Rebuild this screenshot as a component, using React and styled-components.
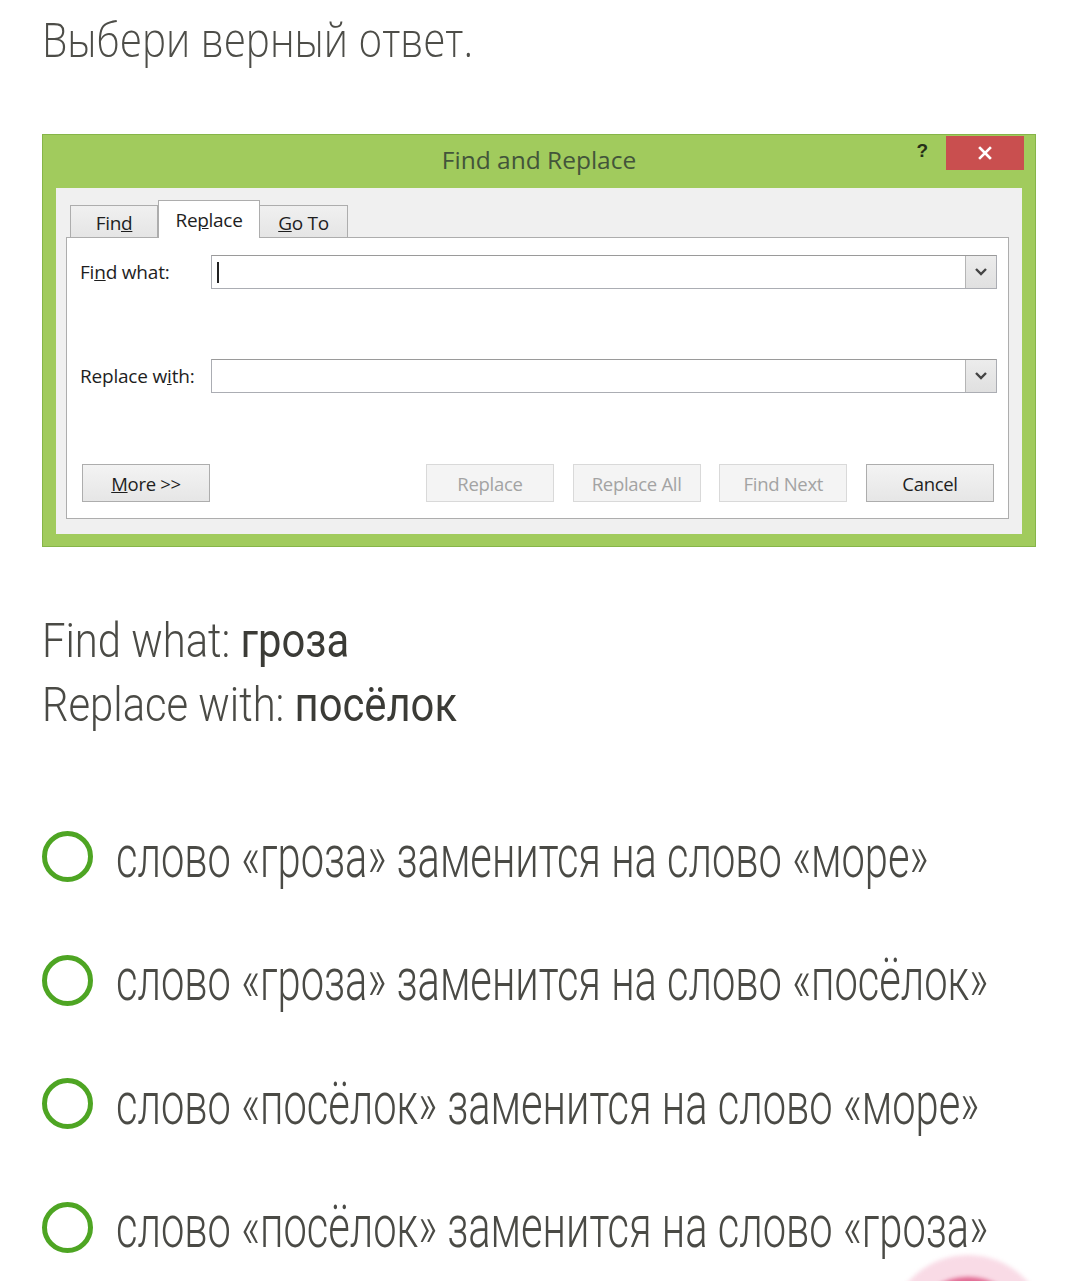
import React from "react";
import styled, { createGlobalStyle } from "styled-components";

const Global = createGlobalStyle`
  html, body { margin: 0; padding: 0; background: #fff; }
  body { width: 1080px; height: 1281px; overflow: hidden; }
  #root { height: 1281px; overflow: hidden; position: relative; }
`;

const Page = styled.div`
  padding: 0 0 0 42px;
  font-family: Roboto, "Noto Sans", sans-serif;
  color: #4a4a45;
`;

const Heading = styled.div`
  padding-top: 15px;
  height: 48px;
  font-family: "Open Sans", Roboto, sans-serif;
  font-weight: 300;
  font-size: 48px;
  line-height: 48px;
  color: #4d4d48;
`;

const Narrow = styled.span`
  display: inline-block;
  white-space: nowrap;
  transform-origin: 0 50%;
  transform: scaleX(${(p) => p.$k || 0.8});
`;

const Frame = styled.div`
  margin-top: 71px;
  width: 994px;
  height: 413px;
  box-sizing: border-box;
  background: #a1cb5d;
  border: 1px solid #86b548;
  display: flex;
  flex-direction: column;
  font-family: "Open Sans", "Noto Sans", sans-serif;
`;

const TitleBar = styled.div`
  height: 53px;
  display: grid;
  grid-template-columns: 1fr auto 1fr;
  align-items: start;
`;

const TitleText = styled.div`
  grid-column: 2;
  padding-top: 10px;
  font-size: 24.5px;
  line-height: 30px;
  color: #43553a;
`;

const Controls = styled.div`
  grid-column: 3;
  justify-self: end;
  display: flex;
  align-items: flex-start;
  padding-top: 1px;
  margin-right: 11px;
`;

const Help = styled.span`
  font-family: "Liberation Sans", Arial, sans-serif;
  font-weight: 700;
  font-size: 19px;
  line-height: 30px;
  color: #263018;
  margin-right: 18px;
`;

const Close = styled.div`
  width: 78px;
  height: 34px;
  background: #c94f4f;
  display: flex;
  align-items: center;
  justify-content: center;
`;

const Client = styled.div`
  flex: 1;
  margin: 0 13px 12px 13px;
  background: #f0f0f0;
  padding: 12px 13px 15px 10px;
  display: flex;
  flex-direction: column;
`;

const Tabs = styled.div`
  display: flex;
  align-items: flex-end;
  margin-left: 4px;
  position: relative;
  z-index: 1;
  margin-bottom: -1px;
`;

const Tab = styled.div`
  box-sizing: border-box;
  width: ${(p) => (p.$active ? 102 : 88)}px;
  height: ${(p) => (p.$active ? 38 : 33)}px;
  border: 1px solid #adadad;
  border-bottom: ${(p) => (p.$active ? "none" : "1px solid #adadad")};
  border-left: ${(p) => (p.$first || p.$active ? "1px solid #adadad" : "none")};
  background: ${(p) => (p.$active ? "#fff" : "linear-gradient(#f0f0f0, #e5e5e5)")};
  font-size: 19px;
  color: #1e1e1e;
  display: flex;
  justify-content: center;
  align-items: center;
  padding-top: ${(p) => (p.$active ? 0 : 2)}px;
  letter-spacing: -0.3px;
`;

const Panel = styled.div`
  flex: 1;
  border: 1px solid #adadad;
  background: #fff;
  padding: 17px 11px 16px 13px;
  display: flex;
  flex-direction: column;
`;

const FieldRow = styled.div`
  display: grid;
  grid-template-columns: 131px 1fr;
  align-items: center;
  margin-bottom: ${(p) => p.$gap}px;
`;

const Label = styled.div`
  font-size: 19px;
  color: #1e1e1e;
  letter-spacing: -0.2px;
  padding-left: 0;
`;

const Input = styled.div`
  height: 34px;
  box-sizing: border-box;
  border: 1px solid #abadb3;
  border-top-color: #9a9a9a;
  display: flex;
  align-items: center;
  background: #fff;
`;

const Caret = styled.span`
  width: 2px;
  height: 21px;
  background: #222;
  margin-left: 5px;
`;

const Drop = styled.div`
  margin-left: auto;
  width: 31px;
  height: 32px;
  box-sizing: border-box;
  border-left: 1px solid #b5b5b5;
  background: linear-gradient(#ececec, #e0e0e0);
  display: flex;
  align-items: center;
  justify-content: center;
`;

const Buttons = styled.div`
  margin-top: auto;
  display: flex;
  gap: 18.7px;
  padding: 0 3px 0 2px;
`;

const Btn = styled.div`
  width: 128px;
  height: 38px;
  box-sizing: border-box;
  border: 1px solid ${(p) => (p.$disabled ? "#d9d9d9" : "#adadad")};
  background: ${(p) => (p.$disabled ? "#f4f4f4" : "linear-gradient(#f3f3f3, #e6e6e6)")};
  color: ${(p) => (p.$disabled ? "#a3a3a3" : "#1e1e1e")};
  font-size: 18.5px;
  letter-spacing: -0.3px;
  display: flex;
  align-items: center;
  justify-content: center;
  margin-right: ${(p) => (p.$push ? "auto" : "0")};
`;

const Spec = styled.div`
  margin-top: 62px;
  font-size: 48px;
  line-height: 64px;
  font-weight: 300;
`;

const Strong = styled.b`
  font-weight: 400;
  color: #3b3b36;
`;

const Options = styled.div`
  margin-top: 58px;
  display: flex;
  flex-direction: column;
`;

const Option = styled.div`
  height: 123.5px;
  display: flex;
  align-items: center;
  gap: 23px;
`;

const Radio = styled.span`
  flex: none;
  width: 51px;
  height: 51px;
  box-sizing: border-box;
  border-radius: 50%;
  border: 5px solid #4ea523;
`;

const OptionText = styled.div`
  font-size: 60px;
  line-height: 60px;
  font-weight: 300;
  color: #4a4a45;
`;

const Fab = styled.div`
  position: absolute;
  left: 888px;
  top: 1255px;
  width: 160px;
  height: 160px;
  border-radius: 50%;
  background: rgba(244, 190, 210, 0.55);
  filter: blur(2px);
  display: flex;
  align-items: center;
  justify-content: center;
`;

const FabRing = styled.div`
  width: 116px;
  height: 116px;
  border-radius: 50%;
  box-sizing: border-box;
  border: 7px solid #e0648e;
`;

const options = [
  "слово «гроза» заменится на слово «море»",
  "слово «гроза» заменится на слово «посёлок»",
  "слово «посёлок» заменится на слово «море»",
  "слово «посёлок» заменится на слово «гроза»",
];

const Chevron = () => (
  <svg width="14" height="10" viewBox="0 0 14 10">
    <path d="M2 2 L7 7 L12 2" stroke="#444" strokeWidth="2.4" fill="none" />
  </svg>
);

export default function App() {
  return (
    <>
      <Global />
      <Page>
        <Heading>
          <Narrow $k={0.842}>Выбери верный ответ.</Narrow>
        </Heading>

        <Frame>
          <TitleBar>
            <TitleText>Find and Replace</TitleText>
            <Controls>
              <Help>?</Help>
              <Close>
                <svg width="16" height="16" viewBox="0 0 16 16">
                  <path d="M3 3 L13 13 M13 3 L3 13" stroke="#fff" strokeWidth="2.6" strokeLinecap="square" />
                </svg>
              </Close>
            </Controls>
          </TitleBar>
          <Client>
            <Tabs>
              <Tab $first>
                Fin<u>d</u>
              </Tab>
              <Tab $active>
                Re<u>p</u>lace
              </Tab>
              <Tab>
                <u>G</u>o To
              </Tab>
            </Tabs>
            <Panel>
              <FieldRow $gap={70}>
                <Label>
                  Fi<u>n</u>d what:
                </Label>
                <Input>
                  <Caret />
                  <Drop>
                    <Chevron />
                  </Drop>
                </Input>
              </FieldRow>
              <FieldRow $gap={0}>
                <Label>
                  Replace w<u>i</u>th:
                </Label>
                <Input>
                  <Drop>
                    <Chevron />
                  </Drop>
                </Input>
              </FieldRow>
              <Buttons>
                <Btn $push>
                  <span>
                    <u>M</u>ore &gt;&gt;
                  </span>
                </Btn>
                <Btn $disabled>Replace</Btn>
                <Btn $disabled>Replace All</Btn>
                <Btn $disabled>Find Next</Btn>
                <Btn>Cancel</Btn>
              </Buttons>
            </Panel>
          </Client>
        </Frame>

        <Spec>
          <div>
            <Narrow $k={0.87}>
              Find what: <Strong>гроза</Strong>
            </Narrow>
          </div>
          <div>
            <Narrow $k={0.87}>
              Replace with: <Strong>посёлок</Strong>
            </Narrow>
          </div>
        </Spec>

        <Options>
          {options.map((t) => (
            <Option key={t}>
              <Radio />
              <OptionText>
                <Narrow $k={0.694}>{t}</Narrow>
              </OptionText>
            </Option>
          ))}
        </Options>
      </Page>
      <Fab>
        <FabRing />
      </Fab>
    </>
  );
}
